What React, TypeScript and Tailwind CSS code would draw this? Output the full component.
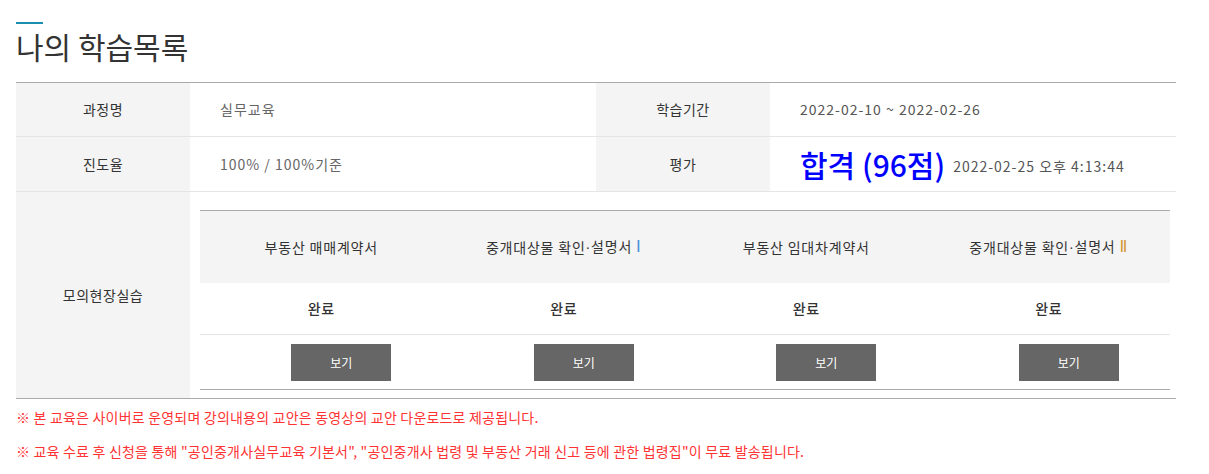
const practices = [
  { title: "부동산 매매계약서", mark: null },
  { title: "중개대상물 확인·설명서", mark: { text: "Ⅰ", color: "text-[#4a90d9]" } },
  { title: "부동산 임대차계약서", mark: null },
  { title: "중개대상물 확인·설명서", mark: { text: "Ⅱ", color: "text-[#d4993a]" } },
];

function Label({ children, className = "" }: { children: React.ReactNode; className?: string }) {
  return (
    <div className={`w-[174px] shrink-0 bg-[#f4f4f4] flex items-center justify-center text-[14px] text-[#333] tracking-[0.5px] ${className}`}>
      {children}
    </div>
  );
}

// middle dot rendered narrow, like the original page's font
function Title({ text }: { text: string }) {
  const parts = text.split("·");
  return (
    <>
      {parts.map((p, i) => (
        <span key={i}>
          {i > 0 && <span className="font-['Liberation_Sans',sans-serif]">·</span>}
          {p}
        </span>
      ))}
    </>
  );
}

export default function App() {
  return (
    <div className="min-h-screen bg-white font-['Noto_Sans_CJK_KR',sans-serif]">
      <div className="w-[1160px] ml-4 pt-[22px]">
        {/* Title */}
        <div className="w-[27px] h-[2px] bg-[#1a8fb0]" />
        <h1 className="h-[44px] leading-[44px] text-[30px] text-[#333]">나의 학습목록</h1>

        {/* Info table */}
        <div className="mt-[14px] border-t border-[#aaa] border-b">
          <div className="flex h-[54px] border-b border-[#e5e5e5]">
            <Label>과정명</Label>
            <div className="w-[406px] flex items-center pl-[30px] text-[14px] text-[#666] tracking-[1px]">실무교육</div>
            <Label>학습기간</Label>
            <div className="flex-1 flex items-center pl-[30px] text-[14px] text-[#555] tracking-[1px]">2022-02-10 ~ 2022-02-26</div>
          </div>
          <div className="flex h-[55px] border-b border-[#e5e5e5]">
            <Label>진도율</Label>
            <div className="w-[406px] flex items-center pl-[30px] text-[14px] text-[#666] tracking-[1px]">100% / 100%기준</div>
            <Label>평가</Label>
            <div className="flex-1 flex items-center pl-[30px] gap-[8px]">
              <span className="text-[30px] leading-none font-medium text-[#0000ff]">합격 (96점)</span>
              <span className="text-[14px] text-[#555] mt-[4px] tracking-[1px]">2022-02-25 오후 4:13:44</span>
            </div>
          </div>

          {/* Practice row */}
          <div className="flex">
            <Label className="h-[206px]">모의현장실습</Label>
            <div className="flex-1 pl-[10px] pr-[6px] pt-[18px] pb-[8px]">
              <div className="border-t border-b border-[#aaa]">
                <div className="grid grid-cols-4 h-[72px] bg-[#f4f4f4]">
                  {practices.map((p, i) => (
                    <div key={i} className="flex items-center justify-center text-[14px] text-[#333] tracking-[0.8px]">
                      <Title text={p.title} />
                      {p.mark && (
                        <span className={`ml-[4px] font-['DejaVu_Sans',sans-serif] text-[16px] leading-none ${p.mark.color}`}>
                          {p.mark.text}
                        </span>
                      )}
                    </div>
                  ))}
                </div>
                <div className="grid grid-cols-4 h-[52px] border-b border-[#e5e5e5]">
                  {practices.map((_, i) => (
                    <div key={i} className="flex items-center justify-center text-[14px] font-medium text-[#333] tracking-[0.5px]">
                      완료
                    </div>
                  ))}
                </div>
                <div className="grid grid-cols-4 h-[54px]">
                  {practices.map((_, i) => (
                    <div key={i} className="flex justify-center pt-[9px]">
                      <button className="ml-[40px] w-[100px] h-[37px] bg-[#666] text-white text-[12px]">보기</button>
                    </div>
                  ))}
                </div>
              </div>
            </div>
          </div>
        </div>

        {/* Notes */}
        <div className="pt-[1px] text-[14px] text-[#ff3333] tracking-[0.2px]">
          <p className="h-[34px] leading-[34px]">※ 본 교육은 사이버로 운영되며 강의내용의 교안은 동영상의 교안 다운로드로 제공됩니다.</p>
          <p className="h-[34px] leading-[34px]">
            ※ 교육 수료 후 신청을 통해 "공인중개사실무교육 기본서", "공인중개사 법령 및 부동산 거래 신고 등에 관한 법령집"이 무료 발송됩니다.
          </p>
        </div>
      </div>
    </div>
  );
}
